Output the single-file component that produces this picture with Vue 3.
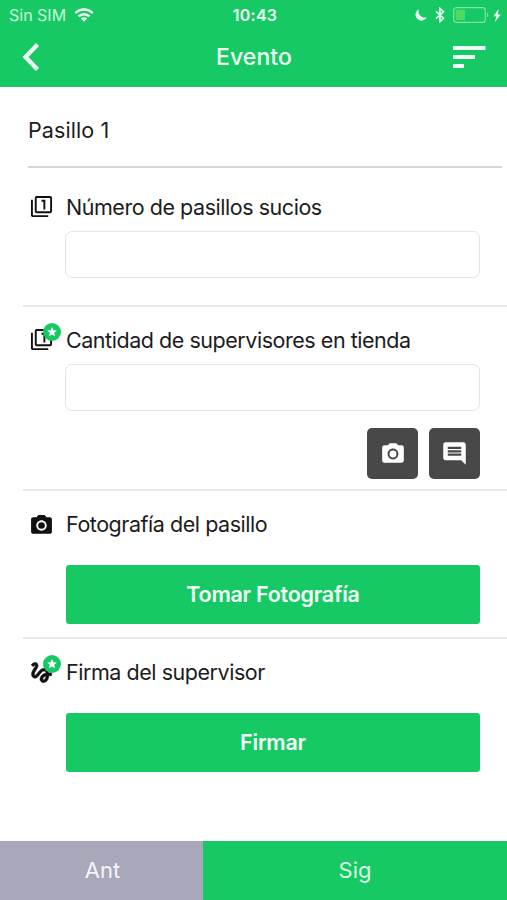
<script setup>
import { ref } from 'vue'

const aisles = ref('')
const supervisors = ref('')
</script>

<template>
  <div class="screen">
    <header class="header">
      <div class="status">
        <div class="status-left">
          <span class="carrier">Sin SIM</span>
          <svg class="wifi" viewBox="0 0 20 14">
            <path d="M1.3 5.1a12.6 12.6 0 0 1 17.4 0M4.5 8.4a8 8 0 0 1 11 0" fill="none" stroke="currentColor" stroke-width="2.5" />
            <path d="M10 13.8L6.8 10.6a4.6 4.6 0 0 1 6.4 0z" fill="currentColor" />
          </svg>
        </div>
        <span class="clock">10:43</span>
        <div class="status-right">
          <svg class="moon" viewBox="0 0 12 12"><path d="M4 .2A6 6 0 1 0 11.9 8.300A6.200 6.200 0 0 1 4 .2z" fill="currentColor" /></svg>
          <svg class="bluetooth" viewBox="0 0 10 16"><path d="M1 4.400L8.500 11.300L5 14.700V1.300L8.500 4.700L1 11.600" fill="none" stroke="currentColor" stroke-width="1.500" /></svg>
          <svg class="battery" viewBox="0 0 37 16">
            <rect x=".7" y=".7" width="31.600" height="14.600" rx="2.600" fill="none" stroke="#7be3a5" stroke-width="1.200" />
            <rect x="2.700" y="2.700" width="9.300" height="10.600" rx=".8" fill="#4cdc62" />
            <path d="M34 5.300q2.600 2.700 0 5.400z" fill="#7be3a5" />
          </svg>
          <svg class="bolt" viewBox="0 0 8 13"><path d="M5.800 0L.4 7.300h2.900L2 13l5.700-7.500H4.600z" fill="currentColor" /></svg>
        </div>
      </div>
      <nav class="nav">
        <svg class="back" viewBox="0 0 18 30"><path d="M15.500 2.500L3.500 15l12 12.500" fill="none" stroke="currentColor" stroke-width="4.300" /></svg>
        <h1 class="title">Evento</h1>
        <svg class="sort" viewBox="0 0 33 22"><path d="M0 0h32.500v4H0zM0 9h22v4H0zM0 18h11v4H0z" fill="currentColor" /></svg>
      </nav>
    </header>

    <main class="content">
      <h2 class="section-title">Pasillo 1</h2>

      <section class="item">
        <div class="label-row">
          <span class="icon-cell">
            <svg class="icon i-count" viewBox="0 0 24 24"><path d="M3 5H1v16c0 1.100.9 2 2 2h16v-2H3V5zm11 10h2V5h-4v2h2v8zm7-14H7c-1.100 0-2 .9-2 2v14c0 1.100.9 2 2 2h14c1.100 0 2-.9 2-2V3c0-1.100-.9-2-2-2zm0 16H7V3h14v14z" /></svg>
          </span>
          <label class="label">Número de pasillos sucios</label>
        </div>
        <input v-model="aisles" class="field" type="text" />
      </section>

      <section class="item item-tools">
        <div class="label-row">
          <span class="icon-cell">
            <svg class="icon i-count" viewBox="0 0 24 24"><path d="M3 5H1v16c0 1.100.9 2 2 2h16v-2H3V5zm11 10h2V5h-4v2h2v8zm7-14H7c-1.100 0-2 .9-2 2v14c0 1.100.9 2 2 2h14c1.100 0 2-.9 2-2V3c0-1.100-.9-2-2-2zm0 16H7V3h14v14z" /></svg>
            <svg class="badge" viewBox="0 0 18 18"><circle cx="9" cy="9" r="9" fill="#17c964" /><path d="M9 4.100l1.400 3.200 3.400.3-2.600 2.200.8 3.400-3-1.800-3 1.800.8-3.400-2.600-2.200 3.400-.3z" fill="#fff" /></svg>
          </span>
          <label class="label">Cantidad de supervisores en tienda</label>
        </div>
        <input v-model="supervisors" class="field" type="text" />
        <div class="tools">
          <button class="tool" type="button">
            <svg class="tool-camera" viewBox="0 0 24 24"><circle cx="12" cy="12" r="3.200" /><path d="M9 2L7.170 4H4c-1.100 0-2 .9-2 2v12c0 1.100.9 2 2 2h16c1.100 0 2-.9 2-2V6c0-1.100-.9-2-2-2h-3.170L15 2H9zm3 15c-2.760 0-5-2.240-5-5s2.240-5 5-5 5 2.240 5 5-2.240 5-5 5z" /></svg>
          </button>
          <button class="tool" type="button">
            <svg class="tool-comment" viewBox="0 0 24 24"><path d="M20 2H4c-1.100 0-2 .9-2 2v12c0 1.100.9 2 2 2h14l4 4V4c0-1.100-.9-2-2-2zm-2 12H6v-2h12v2zm0-3H6V9h12v2zm0-3H6V6h12v2z" /></svg>
          </button>
        </div>
      </section>

      <section class="item item-photo">
        <div class="label-row">
          <span class="icon-cell">
            <svg class="icon i-camera" viewBox="0 0 24 24"><circle cx="12" cy="12" r="3.200" /><path d="M9 2L7.170 4H4c-1.100 0-2 .9-2 2v12c0 1.100.9 2 2 2h16c1.100 0 2-.9 2-2V6c0-1.100-.9-2-2-2h-3.170L15 2H9zm3 15c-2.760 0-5-2.240-5-5s2.240-5 5-5 5 2.240 5 5-2.240 5-5 5z" /></svg>
          </span>
          <span class="label">Fotografía del pasillo</span>
        </div>
        <button class="action" type="button">Tomar Fotografía</button>
      </section>

      <section class="item item-sign">
        <div class="label-row">
          <span class="icon-cell">
            <svg class="icon i-gesture" viewBox="0 0 24 24"><path d="M4.590 6.890c.7-.71 1.400-1.350 1.710-1.220.5.2 0 1.030-.3 1.520-.25.42-2.860 3.890-2.860 6.310 0 1.280.48 2.340 1.340 2.980.75.56 1.740.73 2.640.46 1.070-.31 1.950-1.400 3.060-2.770 1.210-1.490 2.830-3.440 4.080-3.440 1.630 0 1.650 1.010 1.760 1.790-3.780.64-5.380 3.670-5.380 5.370 0 1.700 1.440 3.090 3.210 3.090 1.630 0 4.290-1.330 4.690-6.100H21v-2.500h-2.470c-.15-1.650-1.090-4.200-4.030-4.200-2.250 0-4.180 1.910-4.940 2.840-.58.73-2.060 2.480-2.290 2.720-.25.3-.68.84-1.110.84-.45 0-.72-.83-.36-1.920.35-1.090 1.400-2.860 1.850-3.520.78-1.140 1.300-1.920 1.300-3.280C8.950 3.690 7.310 3 6.440 3 5.120 3 3.970 4 3.720 4.250c-.36.36-.66.66-.88.93l1.750 1.710zm9.290 11.660c-.31 0-.74-.26-.74-.72 0-.6.73-2.200 2.870-2.760-.3 2.690-1.430 3.480-2.130 3.480z" /></svg>
            <svg class="badge" viewBox="0 0 18 18"><circle cx="9" cy="9" r="9" fill="#17c964" /><path d="M9 4.100l1.400 3.200 3.400.3-2.600 2.200.8 3.400-3-1.800-3 1.800.8-3.400-2.600-2.200 3.400-.3z" fill="#fff" /></svg>
          </span>
          <span class="label">Firma del supervisor</span>
        </div>
        <button class="action" type="button">Firmar</button>
      </section>
    </main>

    <footer class="footer">
      <button class="prev" type="button">Ant</button>
      <button class="next" type="button">Sig</button>
    </footer>
  </div>
</template>

<style>
body {
  margin: 0;
  background: #fff;
}
</style>

<style scoped>
.screen {
  display: flex;
  flex-direction: column;
  width: 100%;
  height: 900px;
  overflow: hidden;
  background: #fff;
  color: #1c1c1c;
  font-family: Inter, "Liberation Sans", sans-serif;
}
.screen * {
  box-sizing: border-box;
}
svg {
  display: block;
  flex: none;
}
button {
  margin: 0;
  padding: 0;
  border: 0;
  font-family: inherit;
}
.header {
  flex: none;
  height: 87px;
  background: #17c964;
  color: #f0fff5;
}
.status {
  display: grid;
  grid-template-columns: 1fr auto 1fr;
  align-items: center;
  height: 30px;
  padding: 0 6px 0 9px;
}
.status-left,
.status-right {
  display: flex;
  align-items: center;
}
.status-right {
  justify-content: flex-end;
}
.carrier {
  font-size: 16px;
  color: #c9f7da;
}
.wifi {
  width: 20px;
  height: 14px;
  margin-left: 8px;
}
.clock {
  font-size: 16px;
  font-weight: 600;
  letter-spacing: 0.2px;
}
.moon {
  width: 12px;
  height: 12px;
}
.bluetooth {
  width: 10px;
  height: 16px;
  margin-left: 8px;
}
.battery {
  width: 37px;
  height: 16px;
  margin-left: 8px;
}
.bolt {
  width: 8px;
  height: 13px;
  margin-left: 3px;
}
.nav {
  display: grid;
  grid-template-columns: 1fr auto 1fr;
  align-items: center;
  height: 54px;
  padding: 0 21px 0 22px;
}
.back {
  width: 18px;
  height: 30px;
}
.title {
  margin: 0;
  font-size: 23px;
  font-weight: 500;
  letter-spacing: 0.1px;
}
.sort {
  width: 33px;
  height: 22px;
  justify-self: end;
}
.content {
  flex: 1;
}
.section-title {
  display: flex;
  align-items: center;
  height: 81px;
  margin: 0 5px 0 28px;
  padding-top: 6px;
  border-bottom: 2px solid #d6d6d6;
  font-size: 21.5px;
  font-weight: 400;
  letter-spacing: 0.1px;
}
.item {
  height: 139px;
  margin-left: 23px;
  padding: 24px 27px 0 43px;
  border-bottom: 2px solid #e8e8e8;
}
.item-tools {
  height: 184px;
  padding-top: 18px;
}
.item-photo {
  height: 148px;
  padding-top: 18px;
}
.item-sign {
  border-bottom: 0;
  padding-top: 18px;
}
.label-row {
  display: flex;
  align-items: center;
  height: 30px;
  margin-left: -38px;
}
.icon-cell {
  position: relative;
  display: flex;
  flex: none;
  align-items: center;
  justify-content: center;
  width: 27px;
  height: 30px;
  margin-right: 11px;
}
.icon {
  fill: #111;
}
.i-count {
  width: 23px;
  height: 23px;
  margin-bottom: 1px;
}
.i-camera {
  width: 25px;
  height: 25px;
  margin-top: 2px;
}
.i-gesture {
  width: 27px;
  height: 27px;
  stroke: #111;
  stroke-width: 0.5px;
}
.badge {
  position: absolute;
  top: -2px;
  right: -6px;
  width: 18px;
  height: 18px;
}
.label {
  font-size: 21.5px;
  line-height: 30px;
  letter-spacing: -0.46px;
  white-space: nowrap;
}
.field {
  display: block;
  width: 415px;
  height: 47px;
  margin: 9px 0 0 -1px;
  padding: 0 12px;
  border: 1.5px solid #e4e4e4;
  border-radius: 7px;
  outline: none;
  background: #fff;
  font: inherit;
}
.tools {
  display: flex;
  justify-content: flex-end;
  gap: 11px;
  margin-top: 17px;
}
.tool {
  display: flex;
  align-items: center;
  justify-content: center;
  width: 51px;
  height: 51px;
  border-radius: 5px;
  background: #484848;
}
.tool svg {
  fill: #fff;
}
.tool-camera {
  width: 26px;
  height: 26px;
}
.tool-comment {
  width: 27px;
  height: 27px;
}
.action {
  display: block;
  width: 100%;
  height: 59px;
  margin-top: 26px;
  padding-bottom: 1px;
  border-radius: 3px;
  background: #17c964;
  color: #f2fff6;
  font-size: 21.5px;
  font-weight: 600;
  letter-spacing: -0.25px;
}
.footer {
  display: flex;
  flex: none;
  height: 59px;
}
.footer button {
  padding-bottom: 1px;
  color: #f4f4fa;
  font-size: 22px;
}
.footer .prev {
  width: 203px;
  padding-left: 2px;
  background: #a9a7ba;
}
.footer .next {
  flex: 1;
  background: #17c964;
  color: #dcfbe7;
}
</style>
